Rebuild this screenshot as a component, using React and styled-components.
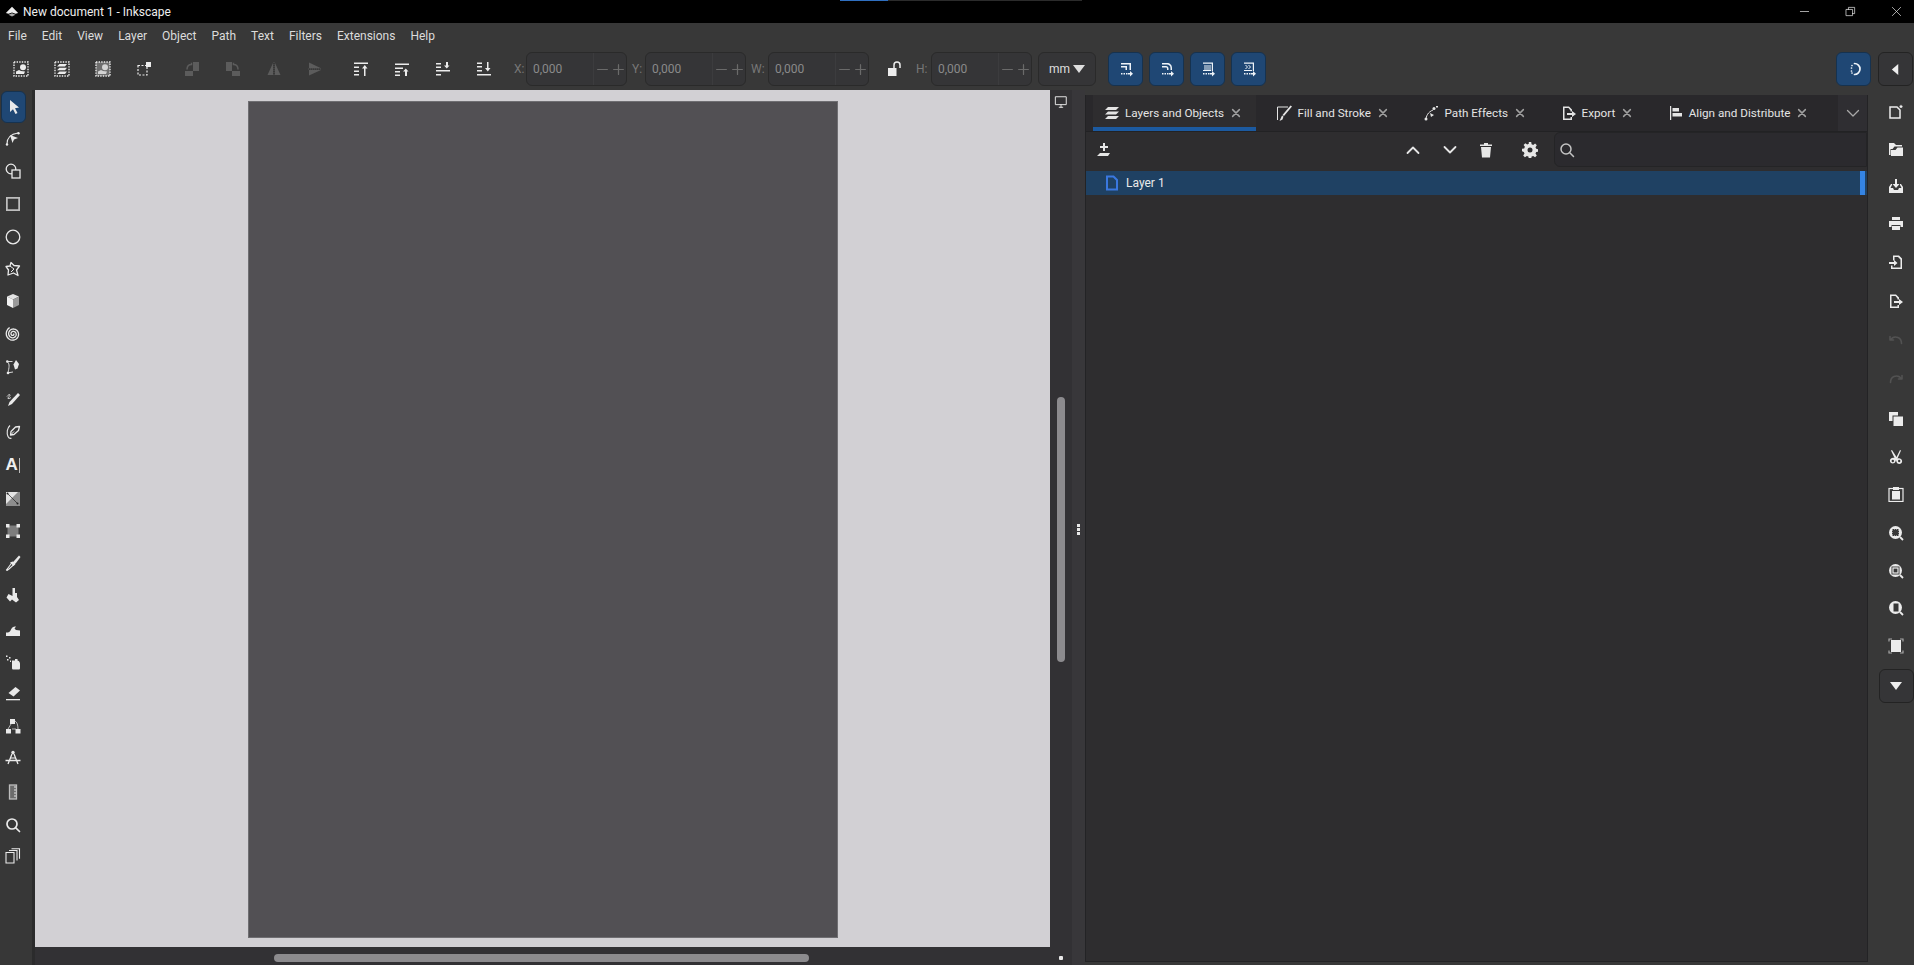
import React from "react"
import styled, { createGlobalStyle } from "styled-components"

const GlobalStyle = createGlobalStyle`
  html, body { margin: 0; padding: 0; height: 100%; background: #383838; overflow: hidden; }
  #root { height: 100%; }
  * { box-sizing: border-box; }
`

const Window = styled.div`
  display: flex;
  flex-direction: column;
  width: 1914px;
  height: 965px;
  overflow: hidden;
  color: #e4e4e4;
  font: 12px Roboto, "Liberation Sans", sans-serif;
  background: #383838;
`

const TitleBar = styled.div`
  position: relative;
  display: flex;
  align-items: center;
  flex: 0 0 23px;
  padding-left: 5px;
  background: #000;
  color: #eee;
`
const TitleText = styled.span`
  margin-left: 4px;
  font-size: 12px;
`
const Progress = styled.div`
  position: absolute;
  top: 0;
  left: 840px;
  width: 242px;
  height: 1px;
  background: linear-gradient(90deg, #2f6fc0 0 48px, #2b2b2b 48px);
`
const WinControls = styled.div`
  display: flex;
  margin: 0 -5px 0 auto;
`
const WinBtn = styled.div`
  display: flex;
  align-items: center;
  justify-content: center;
  width: 46px;
  height: 20px;
`

const MenuBar = styled.div`
  display: flex;
  align-items: center;
  flex: 0 0 25px;
  padding-left: 8px;
  background: #383838;
`
const MenuItem = styled.span`
  margin-right: 15px;
  color: #dcdcdc;
`

const Toolbar = styled.div`
  display: flex;
  align-items: center;
  flex: 0 0 42px;
  background: #383838;
`
const Slot = styled.div`
  display: flex;
  align-items: center;
  justify-content: center;
  flex: 0 0 41px;
  margin-left: ${p => p.$ml || 0}px;
  color: ${p => (p.$off ? "#5c5c5c" : "#ececec")};
`
const FieldLabel = styled.span`
  margin-left: ${p => p.$ml}px;
  width: ${p => p.$w}px;
  color: #777;
`
const Spin = styled.div`
  display: flex;
  align-items: center;
  width: 101px;
  height: 34px;
  padding-left: 6px;
  border: 1px solid #2a2a2a;
  border-radius: 6px;
  background: #353537;
  color: #8a8a8a;
`
const SpinValue = styled.span`
  flex: 1;
`
const SpinSign = styled.div`
  display: flex;
  align-items: center;
  justify-content: center;
  gap: 3px;
  width: 33px;
  height: 100%;
  border-left: 1px solid #3c3c3e;
  color: #6a6a6a;
`
const LockSlot = styled.div`
  display: flex;
  justify-content: center;
  width: 38px;
  margin-left: ${p => p.$ml}px;
  color: #ededed;
`
const UnitBox = styled.div`
  display: flex;
  align-items: center;
  justify-content: center;
  gap: 3px;
  width: 58px;
  height: 34px;
  margin-left: 6px;
  border: 1px solid #2a2a2a;
  border-radius: 6px;
  background: #353537;
  color: #dedede;
`
const BlueBtn = styled.div`
  display: flex;
  align-items: center;
  justify-content: center;
  width: 35px;
  height: 34px;
  margin-left: ${p => p.$ml}px;
  border: 1px solid #16324f;
  border-radius: 6px;
  background: #1f4774;
  color: #eef3f8;
`
const PlainBtn = styled.div`
  display: flex;
  align-items: center;
  justify-content: center;
  width: 35px;
  height: 34px;
  border: 1px solid #232323;
  border-radius: 6px;
  background: #353537;
  color: #eee;
`
const Spacer = styled.div`
  flex: 1;
`
const PinBtn = styled(PlainBtn)`
  margin: 0 1px 0 7px;
`

const Main = styled.div`
  display: flex;
  flex: 1;
  min-height: 0;
`
const LeftBar = styled.div`
  display: flex;
  flex-direction: column;
  flex: 0 0 35px;
  padding: 1px 0 0 0;
  border-right: 3px solid #2b2b2c;
  background: #373737;
`
const Tool = styled.div`
  display: flex;
  align-items: center;
  justify-content: center;
  flex: 0 0 ${p => p.$h}px;
  width: ${p => (p.$on ? 25 : 26)}px;
  margin-left: 0;
  color: #eaeaea;
  ${p =>
    p.$on &&
    `
    margin: 0 0 0 1px;
    background: #1f4774;
    border: 1px solid #16324f;
    border-radius: 6px;
  `}
`

const Workspace = styled.div`
  display: grid;
  grid-template-columns: 1015px 22px;
  grid-template-rows: 857px 18px;
  flex: 0 0 1037px;
  background: #323134;
`
const Canvas = styled.div`
  display: flex;
  justify-content: center;
  padding-top: 11px;
  background: #d2d0d4;
`
const Page = styled.div`
  width: 590px;
  height: 837px;
  border: 1px solid #6f6e72;
  background: #525054;
`
const VRail = styled.div`
  display: flex;
  flex-direction: column;
  align-items: center;
  padding-top: 5px;
  color: #e8e8e8;
`
const VThumb = styled.div`
  width: 8px;
  height: 265px;
  margin-top: 288px;
  border-radius: 4px;
  background: #8c8b8e;
`
const HRail = styled.div`
  padding: 7px 0 0 239px;
`
const HThumb = styled.div`
  width: 535px;
  height: 8px;
  border-radius: 4px;
  background: #8c8b8e;
`
const Corner = styled.div`
  display: flex;
  align-items: center;
  justify-content: center;
  padding-top: 4px;
`
const CornerDot = styled.div`
  width: 4px;
  height: 4px;
  border-radius: 1px;
  background: #e8e8e8;
`

const Handle = styled.div`
  display: flex;
  flex-direction: column;
  align-items: center;
  justify-content: center;
  gap: 1px;
  flex: 0 0 13px;
  padding: 3px 0 0 0;
  background: #38373a;
`
const HandleDot = styled.div`
  width: 3px;
  height: 3px;
  background: #e8e8e8;
`

const Panel = styled.div`
  display: flex;
  flex-direction: column;
  flex: 0 0 783px;
  min-width: 0;
  margin: 5px 0 3px;
  border: 1px solid #232325;
  border-top: 0;
  background: #2e2d2f;
`
const TabStrip = styled.div`
  display: flex;
  align-items: stretch;
  flex: 0 0 37px;
  padding-left: 7px;
  border-bottom: 1px solid #222224;
  background: #29282b;
  font-size: 11.7px;
`
const Tab = styled.div`
  display: flex;
  align-items: center;
  flex: 0 0 auto;
  height: 36px;
  margin-right: 9.5px;
  padding: 4px 14px 0 11px;
  border-bottom: 4px solid ${p => (p.$active ? "#1c5aa0" : "transparent")};
  background: ${p => (p.$active ? "#2e2d2f" : "transparent")};
  color: #e4e4e4;
  white-space: nowrap;
`
const TabName = styled.span`
  margin: 0 6px 0 5px;
`
const TabClose = styled.span`
  display: flex;
  color: #a0a0a0;
`
const TabMore = styled.div`
  display: flex;
  align-items: center;
  justify-content: center;
  flex: 0 0 29px;
  margin-left: auto;
  background: #2f2e32;
  color: #a8a8a8;
`
const PanelBar = styled.div`
  display: flex;
  align-items: center;
  flex: 0 0 39px;
  padding: 0 0 4px 10px;
  color: #e6e6e6;
`
const BarIcon = styled.div`
  display: flex;
  margin-left: ${p => p.$ml || 0}px;
`
const SearchBox = styled.div`
  display: flex;
  align-items: center;
  flex: 1;
  height: 35px;
  margin-left: 16px;
  padding-left: 4px;
  border: 1px solid #242426;
  border-radius: 6px 0 0 6px;
  background: #2b2a2e;
  color: #c4c4c4;
`
const LayerRow = styled.div`
  display: flex;
  align-items: center;
  height: 24px;
  padding: 0 2px 0 18px;
  background: #1f4163;
  color: #eaeaea;
`
const LayerName = styled.span`
  flex: 1;
  margin-left: 6px;
`
const RowMark = styled.div`
  width: 5px;
  height: 100%;
  background: #3584e4;
`

const RightBar = styled.div`
  display: flex;
  flex-direction: column;
  align-items: center;
  flex: 0 0 46px;
  padding: 4px 0 0 10px;
  background: #383838;
`
const RightTool = styled.div`
  display: flex;
  align-items: center;
  justify-content: center;
  flex: 0 0 ${p => p.$h}px;
  color: ${p => (p.$off ? "#525252" : "#ececec")};
`
const MoreBtn = styled(PlainBtn)`
  margin: 5px 0 0 0;
`
const TextTool = styled.span`
  font: bold 17px "Liberation Sans", sans-serif;
  color: #efefef;
`
const TextCaret = styled.span`
  width: 1.5px;
  height: 15px;
  margin-left: 1px;
  background: #bdbdbd;
`

const Glyph = ({ s = 16, children }) => (
  <svg width={s} height={s} viewBox="0 0 16 16" fill="currentColor" stroke="none">
    {children}
  </svg>
)

const Line = ({ d, w = 1.4, s = 16 }) => (
  <svg width={s} height={s} viewBox="0 0 16 16" fill="none" stroke="currentColor" strokeWidth={w} strokeLinecap="round" strokeLinejoin="round">
    <path d={d} />
  </svg>
)

const Tri = ({ dir = "down", s = 12 }) => (
  <svg width={s} height={s} viewBox="0 0 12 12" fill="currentColor">
    {dir === "down" && <path d="M0 2h12L6 10z" />}
    {dir === "left" && <path d="M9 0v12L2 6z" />}
  </svg>
)

const dots = <rect x="1" y="1" width="14" height="14" fill="none" stroke="currentColor" strokeWidth="1.4" strokeDasharray="1.4 1.2" />

const topIcons = [
  <Glyph>{dots}<circle cx="10" cy="6.2" r="3" /><path d="M3 13v-2.5l3-1.5 2 1 4 .5-1 2.5z" /></Glyph>,
  <Glyph>{dots}<path d="M5.500 3h7.500l-2 2.500H3zM5.500 6.800h7.500l-2 2.500H3zM5.500 10.500h7.500l-2 2.500H3z" /></Glyph>,
  <Glyph><rect x="1" y="1" width="14" height="14" opacity=".3" />{dots}<circle cx="10" cy="6.2" r="3" opacity=".8" /><path d="M3 13v-2.500l3-1.500 2 1 4 .5-1 2.500z" opacity=".8" /></Glyph>,
  <Glyph><rect x="2" y="4.500" width="9" height="9.500" fill="none" stroke="currentColor" strokeWidth="1.200" strokeDasharray="2 1.500" /><rect x="10" y="1" width="5" height="5" /></Glyph>,
  <Glyph><rect x="1" y="10" width="8" height="5" /><rect x="9" y="1" width="6" height="9" /><path d="M3 8.500C3 5 4.500 3.500 7.500 3.500V1.800" fill="none" stroke="currentColor" strokeWidth="1.500" /></Glyph>,
  <Glyph><rect x="7" y="10" width="8" height="5" /><rect x="1" y="1" width="6" height="9" /><path d="M13 8.500C13 5 11.500 3.500 8.500 3.500V1.800" fill="none" stroke="currentColor" strokeWidth="1.500" /></Glyph>,
  <Glyph><path d="M7 2v12H1.500zM9 2v12h5.500z" /><path d="M8 1v14" stroke="currentColor" strokeWidth=".8" strokeDasharray="1 1" /></Glyph>,
  <Glyph><path d="M2 1.500l12 5.800H2zM2 9h12L2 14.500z" /><path d="M1 8h14" stroke="currentColor" strokeWidth=".8" strokeDasharray="1 1" /></Glyph>,
  <Glyph><path d="M1 1.500h14v1.500H1zM1 5.500h5V7H1zM1 9.500h5V11H1zM1 13h5v1.500H1zM11 15V7.500H9L11.800 4l2.700 3.500h-2V15z" /></Glyph>,
  <Glyph><path d="M1 2.500h14V4H1zM1 6.500h8V8H1zM1 10h5v1.500H1zM1 13.500h5V15H1zM11 15v-4.500H9L11.800 7.500l2.700 3H13V15z" /></Glyph>,
  <Glyph><path d="M1 2h5v1.500H1zM1 5.500h5V7H1zM1 9h14v1.500H1zM1 13h5v1.500H1zM11 1v3.500H9L11.800 7.500l2.700-3H13V1z" /></Glyph>,
  <Glyph><path d="M1 1.500h5V3H1zM1 5h5v1.500H1zM1 9h5v1.500H1zM1 13h14v1.500H1zM11 1v6H9l2.800 3.500L14.500 7h-2V1z" /></Glyph>,
]

const arrowDots = <path d="M3 12h1.500v1.500H3zM5.500 12H7v1.500H5.500zM8 12h1.500v1.500H8zM10 12h2V10l3 2.700-3 2.700v-2h-2z" />

const blueIcons = [
  <Glyph><path d="M3 2h10v7h-1.500V3.500H3zM3 5h6v4H7.500V6.500H3z" />{arrowDots}</Glyph>,
  <Glyph><path d="M3 2h5c3 0 5 2 5 5v2h-1.500V7c0-2-1.500-3.500-3.500-3.500H3zM3 5h4c1.500 0 2.500 1 2.500 2.500V9H8V7.500C8 7 7.500 6.500 7 6.500H3z" />{arrowDots}</Glyph>,
  <Glyph><path d="M3 1.500h10V10h-1.200V2.700H3z" /><path d="M4 4h7v5H4z" opacity=".5" /><path d="M3 9h8v1H3z" />{arrowDots}</Glyph>,
  <Glyph><path d="M3 1.500h10V10h-1.200V2.700H3z" /><path d="M4 4l2 2-2 2 1 0 2-2-2-2zM7 4l2 2-2 2 1 0 2-2-2-2z" /><path d="M3 9h8v1H3z" />{arrowDots}</Glyph>,
]

// spiral of about 2.7 turns, from the centre outwards
const spiralPath = Array.from({ length: 55 }, (_, i) => {
  const a = i * 0.31
  const r = 0.8 + i * 0.118
  return `${i ? "L" : "M"}${(8 + r * Math.cos(a)).toFixed(2)} ${(8 + r * Math.sin(a)).toFixed(2)}`
}).join("")

const leftTools = [
  { h: 32, on: true, i: <Glyph><path d="M4 1l9 7.500-4 .8 2.500 4.700-2 1L7 10.300l-3 2.700z" /></Glyph> },
  { h: 31, i: <Glyph><path d="M2 13C2 7 6 3 13 2" fill="none" stroke="currentColor" strokeWidth="1.100" /><path d="M5 4l8 3-4 1.500L7.500 12z" /><circle cx="13.500" cy="2.300" r="1.200" /><circle cx="2" cy="13.500" r="1.200" /></Glyph> },
  { h: 33, i: <Glyph><circle cx="6" cy="6" r="4.800" fill="none" stroke="currentColor" strokeWidth="1.300" /><rect x="7" y="7" width="8" height="8" fill="#373737" stroke="currentColor" strokeWidth="1.300" /></Glyph> },
  { h: 34, i: <Glyph s={14}><rect x="1" y="1" width="14" height="14" fill="none" stroke="#bdbdbd" strokeWidth="2" /></Glyph> },
  { h: 32, i: <Glyph><circle cx="8" cy="8" r="6.800" fill="none" stroke="currentColor" strokeWidth="1.300" /></Glyph> },
  { h: 32, i: <Glyph><path d="M6 1.500l3 3 5.500.5-3 4 1.500 5.500-4.500-2.500L3 14 3.500 9 1 5.500 5 5z" fill="none" stroke="currentColor" strokeWidth="1.300" strokeLinejoin="round" /><path d="M5 5l4 3-3 3" fill="none" stroke="currentColor" strokeWidth="1" /></Glyph> },
  { h: 32, i: <Glyph><path d="M8 1l6 2.500-6 3-6-3z" fill="#e2e2e2" /><path d="M2 3.500l6 3V15l-6-3z" fill="#f2f2f2" /><path d="M14 3.500l-6 3V15l6-3z" fill="#9a9a9a" /></Glyph> },
  { h: 33, i: <Line w={1.300} d={spiralPath} /> },
  { h: 33, i: <Glyph><path d="M2 2.500h5.500M2.500 3C5 5 4 9 3 13.500M3 13.800L8 13" fill="none" stroke="currentColor" strokeWidth=".9" /><circle cx="2.300" cy="2.500" r="1.300" /><circle cx="3" cy="14" r="1.300" /><path d="M11 1l3 4-1.500 4.500-2.500 1-1.500-5z" /></Glyph> },
  { h: 33, i: <Glyph><path d="M13 1l2 2-8 9-4 2 1.500-4z" /><path d="M2 4.500c1.500-2 3-2.500 3-1.300S2 6 3 6.500s3-1 3-1" fill="none" stroke="currentColor" strokeWidth=".9" /></Glyph> },
  { h: 32, i: <Glyph><path d="M14.500 2.500l-1 4-4.500 4-3.500.5.500-3.500 4.500-4.500z" fill="none" stroke="currentColor" strokeWidth="1.300" strokeLinejoin="round" /><path d="M6 10.500l3-3" stroke="currentColor" strokeWidth="1" /><path d="M5 1.500C2 4 1.500 9 3 12.500c.8 1.800 2.300 2 3.500 1.800" fill="none" stroke="currentColor" strokeWidth="1.100" /></Glyph> },
  { h: 34, i: <><TextTool>A</TextTool><TextCaret /></> },
  { h: 33, i: <Glyph><rect x="1" y="1" width="14" height="14" fill="#8d8d8d" /><path d="M1 1h12L1 13z" fill="#e4e4e4" /><path d="M2 2l11 11" stroke="#222" strokeWidth=".7" /><circle cx="2.500" cy="2.500" r="1" fill="#222" /><circle cx="12.500" cy="12.500" r="1" fill="#222" /></Glyph> },
  { h: 32, i: <Glyph><rect x="2.500" y="2.500" width="11" height="11" fill="#7d7d7d" /><rect x="1" y="1" width="3.500" height="3.500" /><rect x="11.500" y="1" width="3.500" height="3.500" /><rect x="1" y="11.500" width="3.500" height="3.500" /><rect x="11.500" y="11.500" width="3.500" height="3.500" /></Glyph> },
  { h: 32, i: <Glyph><path d="M14 .5l1.500 1.500-4.500 6L9 9.500 7.500 8 9 6z" /><path d="M7 7.500L9 9.500 4 14l-2 1.500-.5-.5L3 13z" fill="none" stroke="currentColor" strokeWidth="1.100" /><path d="M8 6.500l2.500 2.500-2 2L5 7.500z" /></Glyph> },
  { h: 32, i: <Glyph><path d="M7.500 1h2.500v5h2v4l2 3-3 2.500L7 12.500 5 14.500 1.500 10.500 3.500 7 7.500 9z" /></Glyph> },
  { h: 35, i: <Glyph><path d="M1 11.500c3 0 4-.5 5-3 1-2.500 3-3.500 5-3l-1.500 2 1.500 1.500 4 .5V15H1z" /></Glyph> },
  { h: 32, i: <Glyph><path d="M7 6.500h3V5h2.500v1.500c2 .5 2.500 2 2.500 3.500v4c0 1-.5 1.500-1.500 1.500h-5c-1 0-1.500-.5-1.500-1.500z" /><path d="M1 1.500h1.500V3H1zM4 3h1.500v1.500H4zM2 5h1.500v1.500H2zM5 6.500h1V8H5z" /></Glyph> },
  { h: 32, i: <Glyph><path d="M10.500 1l4.500 3.500-6.500 6L3.500 7z" /><path d="M1 13h14v1.300H1z" /></Glyph> },
  { h: 31, i: <Glyph><rect x="5" y="1" width="5" height="5" /><rect x="1" y="11" width="5" height="4.500" /><rect x="10.500" y="11" width="5" height="4.500" /><path d="M6 6l-3 5M10 3c2 1 3 4 3 8M7 11h4" fill="none" stroke="currentColor" strokeWidth=".7" /></Glyph> },
  { h: 33, i: <Glyph><circle cx="8" cy="2.500" r="1.700" /><path d="M7 4L3 14M9 4l4 10M.5 10.500h15" fill="none" stroke="currentColor" strokeWidth="1.300" /><path d="M5 8h6" stroke="currentColor" strokeWidth="1.100" /></Glyph> },
  { h: 35, i: <Glyph><rect x="4.500" y="1" width="7" height="14" fill="#6c6c6c" stroke="#bdbdbd" strokeWidth="1.300" /><path d="M9 3h2M9 6h2M9 9h2M9 12h2" stroke="#e4e4e4" strokeWidth="1" /></Glyph> },
  { h: 32, i: <Line w={1.700} d="M7 2a5 5 0 1 0 0 10a5 5 0 0 0 0-10zM10.800 10.800L14.500 14.500" /> },
  { h: 30, i: <Glyph><path d="M1 4.500h8v10.500H1z" fill="none" stroke="currentColor" strokeWidth="1.100" /><path d="M4 2.500h8v10M6.500.7h8v10" fill="none" stroke="currentColor" strokeWidth="1.100" /></Glyph> },
]

const zoomLens = (
  <>
    <circle cx="7.500" cy="7.500" r="6.500" />
    <path d="M12 12l3 3" stroke="currentColor" strokeWidth="1.800" />
  </>
)

const rightTools = [
  { h: 36, i: <Glyph><path d="M2 3h7l3 3v8H2z" fill="none" stroke="currentColor" strokeWidth="1.500" /><path d="M13 .5l.7 1.300 1.300.2-1 1 .3 1.300-1.300-.7-1.300.7.300-1.300-1-1 1.300-.2z" /></Glyph> },
  { h: 37, i: <Glyph><path d="M1 2h5l2 2h6v1.500H6.500L4.500 8H2.500v6H1z" /><path d="M3 15V9h4.500l2-2.500H15V15z" /></Glyph> },
  { h: 37, i: <Glyph><path d="M7 1h2v5h2.500L8 10 4.500 6H7z" /><path d="M1 9l2-3h1v1L2.500 10H5l1 2h4l1-2h2.500L12 7V6h1l2 3v6H1z" /></Glyph> },
  { h: 38, i: <Glyph><path d="M4 2h8v3H4zM1 6h14v6h-2.500v-2h-9v2H1zM4 11h8v4H4z" /></Glyph> },
  { h: 39, i: <Glyph><path d="M5 1.500h6l3 3V15H3v-3.500h1.500v2h8V5.500L10 3H6.500v3.500H5z" /><path d="M1 8h5V6l3.500 3L6 12v-2H1z" /></Glyph> },
  { h: 40, i: <Glyph><path d="M2 1.500h6l3 3v2H9.500V5.500L7.500 3H3.500v10.500h6V12H11v3H2z" /><path d="M6 8h5V6l4 3-4 3v-2H6z" /></Glyph> },
  { h: 39, off: true, i: <Line w={1.600} d="M2 3.500v3.500h3.500M2.500 7C4 4.500 7 3.500 10 4.500c2.500 1 3.500 3.500 3.500 6" /> },
  { h: 39, off: true, i: <Line w={1.600} d="M14 3.500v3.500h-3.500M13.500 7C12 4.500 9 3.500 6 4.500c-2.500 1-3.500 3.500-3.500 6" /> },
  { h: 39, i: <Glyph><rect x="1" y="1" width="9" height="9" /><rect x="5" y="5" width="10.500" height="10.500" stroke="#383838" strokeWidth="1" /></Glyph> },
  { h: 37, i: <Glyph><path d="M4 1l4.500 7 3.500-7 1 .5-3.500 8c1-.5 2.500-.5 3.500.5 1.500 1 1.500 3.500 0 4.500-1.500 1-4 .5-4.500-1.500L8 11l-.5 1.500c-.5 2-3 2.500-4.500 1.500-1.500-1-1.500-3.500 0-4.500 1-1 2.500-1 3.500-.5L3 1.500z" /><circle cx="4.800" cy="12" r="1.200" fill="#383838" /><circle cx="11.200" cy="12" r="1.200" fill="#383838" /></Glyph> },
  { h: 38, i: <Glyph><rect x="1" y="2.500" width="14" height="13" fill="none" stroke="currentColor" strokeWidth="1.200" /><path d="M5 1h6v3H5zM4 5h8v8.500H4z" /></Glyph> },
  { h: 39, i: <Glyph>{zoomLens}<rect x="4" y="4" width="7" height="7" fill="#383838" /><rect x="4" y="4" width="7" height="7" fill="none" stroke="currentColor" strokeDasharray="1 1" /></Glyph> },
  { h: 37, i: <Glyph>{zoomLens}<rect x="3.500" y="3.500" width="8" height="8" fill="#383838" /><rect x="5" y="5" width="5" height="5" fill="none" stroke="currentColor" strokeWidth="1.200" /></Glyph> },
  { h: 38, i: <Glyph>{zoomLens}<rect x="5" y="3" width="6" height="9" fill="#383838" stroke="currentColor" /></Glyph> },
  { h: 37, i: <Glyph><rect x="3" y="2" width="10" height="12" /><path d="M1 3.500V1h3M12 1h3v2.500M1 12.500V15h3M12 15h3v-2.500" fill="none" stroke="#a8a8a8" strokeWidth="1.200" /></Glyph> },
]

const exportIcon = <Glyph><path d="M2 1.500h6l3 3v2H9.500V5.500L7.500 3H3.500v10.500h6V12H11v3H2z" /><path d="M6 8h5V6l4 3-4 3v-2H6z" /></Glyph>

const tabs = [
  { name: "Layers and Objects", active: true, i: <Glyph><path d="M4 2h11l-3 3H1zM4 6.500h11l-3 3H1zM4 11h11l-3 3H1z" /></Glyph> },
  { name: "Fill and Stroke", i: <Glyph><path d="M12 2H1.500v13" fill="none" stroke="currentColor" strokeWidth="1" /><path d="M14.500.5L16 1.500 8 11 6.500 10zM6 10.500l1.500 1-1 3-3 1.500z" /></Glyph> },
  { name: "Path Effects", i: <Glyph><path d="M3 15c0-4 2-8 7-10" fill="none" stroke="currentColor" strokeWidth="1" /><circle cx="3" cy="14" r="1.500" /><path d="M7 8l4 2-3 2z" /><circle cx="11" cy="3.500" r="1.500" /><path d="M13 1h2v1.500h-2z" /></Glyph> },
  { name: "Export", i: exportIcon },
  { name: "Align and Distribute", i: <Glyph><path d="M2 1h1.200v14H2zM4.500 3H11v3.500H4.500zM4.500 8H14v3.500H4.500z" /></Glyph> },
]

const menus = ["File", "Edit", "View", "Layer", "Object", "Path", "Text", "Filters", "Extensions", "Help"]

const SpinField = () => (
  <Spin>
    <SpinValue>0,000</SpinValue>
    <SpinSign>
      <Line s={13} w={1.500} d="M2 8h12" />
      <Line s={13} w={1.500} d="M2 8h12M8 2v12" />
    </SpinSign>
  </Spin>
)

export default function App() {
  return (
    <Window>
      <GlobalStyle />
      <TitleBar>
        <Progress />
        <Glyph s={14}>
          <path d="M8 2l7 7-3 1-4-1.500L4 10 1 9z" />
          <path d="M4 11l4-1.500 4 1.500-4 2z" opacity=".7" />
        </Glyph>
        <TitleText>New document 1 - Inkscape</TitleText>
        <WinControls>
          <WinBtn><Line s={11} w={1} d="M2 8h12" /></WinBtn>
          <WinBtn><Line s={11} w={1} d="M2 5h9v9H2zM5 5V2h9v9h-3" /></WinBtn>
          <WinBtn><Line s={11} w={1} d="M2 2l12 12M14 2L2 14" /></WinBtn>
        </WinControls>
      </TitleBar>

      <MenuBar>
        {menus.map(m => (
          <MenuItem key={m}>{m}</MenuItem>
        ))}
      </MenuBar>

      <Toolbar>
        {topIcons.map((icon, i) => (
          <Slot key={i} $off={i >= 4 && i <= 7} $ml={i === 4 ? 7 : i === 8 ? 5 : 0}>
            {icon}
          </Slot>
        ))}
        <FieldLabel $ml={10} $w={12}>X:</FieldLabel>
        <SpinField />
        <FieldLabel $ml={5} $w={13}>Y:</FieldLabel>
        <SpinField />
        <FieldLabel $ml={5} $w={17}>W:</FieldLabel>
        <SpinField />
        <LockSlot $ml={6}>
          <Glyph>
            <rect x="2" y="7" width="8.500" height="8" />
            <path d="M8 7V4a3 3 0 0 1 6 0v3" fill="none" stroke="currentColor" strokeWidth="1.500" />
          </Glyph>
        </LockSlot>
        <FieldLabel $ml={3} $w={15}>H:</FieldLabel>
        <SpinField />
        <UnitBox>mm <Tri /></UnitBox>
        {blueIcons.map((icon, i) => (
          <BlueBtn key={i} $ml={i === 0 ? 12 : 6}>{icon}</BlueBtn>
        ))}
        <Spacer />
        <BlueBtn $ml={0}>
          <Line w={1.700} d="M8.500 2.500A5.500 5.500 0 0 1 8.500 13.500M6 4.500l0 0M5.500 7v0M5.500 10v0M6 12l0 0" />
        </BlueBtn>
        <PinBtn><Tri dir="left" s={11} /></PinBtn>
      </Toolbar>

      <Main>
        <LeftBar>
          {leftTools.map((t, i) => (
            <Tool key={i} $h={t.h} $on={t.on}>{t.i}</Tool>
          ))}
        </LeftBar>

        <Workspace>
          <Canvas><Page /></Canvas>
          <VRail>
            <Line s={14} w={1.100} d="M2 2h12v9H2zM6 14h4M8 11v3" />
            <VThumb />
          </VRail>
          <HRail><HThumb /></HRail>
          <Corner><CornerDot /></Corner>
        </Workspace>

        <Handle>
          <HandleDot /><HandleDot /><HandleDot />
        </Handle>

        <Panel>
          <TabStrip>
            {tabs.map(t => (
              <Tab key={t.name} $active={t.active}>
                {t.i}
                <TabName>{t.name}</TabName>
                <TabClose><Line s={12} w={2} d="M3.500 3.500l9 9M12.500 3.500l-9 9" /></TabClose>
              </Tab>
            ))}
            <TabMore><Line w={1.300} d="M2.500 5.500L8 11l5.500-5.500" /></TabMore>
          </TabStrip>
          <PanelBar>
            <BarIcon>
              <Glyph><path d="M7 1h2v3h3v2H9v3H7V6H4V4h3zM4 11h10l-2 3H1z" /></Glyph>
            </BarIcon>
            <BarIcon $ml={293}><Line w={1.800} d="M2.500 11L8 5.500l5.500 5.500" /></BarIcon>
            <BarIcon $ml={21}><Line w={1.800} d="M2.500 5L8 10.500 13.500 5" /></BarIcon>
            <BarIcon $ml={20}><Glyph><path d="M6 1h4v1.500h4v1.500H2V2.500h4zM3 5h10l-1 10.500H4z" /></Glyph></BarIcon>
            <BarIcon $ml={28}><Glyph><path fillRule="evenodd" d="M6.800 0h2.400l.4 2.200 1.600.7 1.900-1.300 1.700 1.700-1.300 1.900.7 1.600 2.200.4v2.400l-2.200.4-.7 1.600 1.300 1.900-1.700 1.700-1.900-1.300-1.600.7-.4 2.200H6.800l-.4-2.200-1.600-.7-1.900 1.300-1.700-1.700 1.300-1.900-.7-1.600L0 9.200V6.800l2.200-.4.7-1.600L1.600 2.900l1.700-1.700 1.900 1.300 1.600-.7zM8 5.500a2.500 2.500 0 1 0 0 5 2.500 2.500 0 0 0 0-5z" /></Glyph></BarIcon>
            <SearchBox><Line w={1.500} d="M7 2a5 5 0 1 0 0 10a5 5 0 0 0 0-10zM10.800 10.800L14.500 14.500" /></SearchBox>
          </PanelBar>
          <LayerRow>
            <svg width="16" height="16" viewBox="0 0 16 16" fill="none" stroke="#3a78e0" strokeWidth="2">
              <path d="M3 1.500h6.500L13 5v9.500H3z" />
            </svg>
            <LayerName>Layer 1</LayerName>
            <RowMark />
          </LayerRow>
        </Panel>

        <RightBar>
          {rightTools.map((t, i) => (
            <RightTool key={i} $h={t.h} $off={t.off}>{t.i}</RightTool>
          ))}
          <MoreBtn><Tri /></MoreBtn>
        </RightBar>
      </Main>
    </Window>
  )
}
